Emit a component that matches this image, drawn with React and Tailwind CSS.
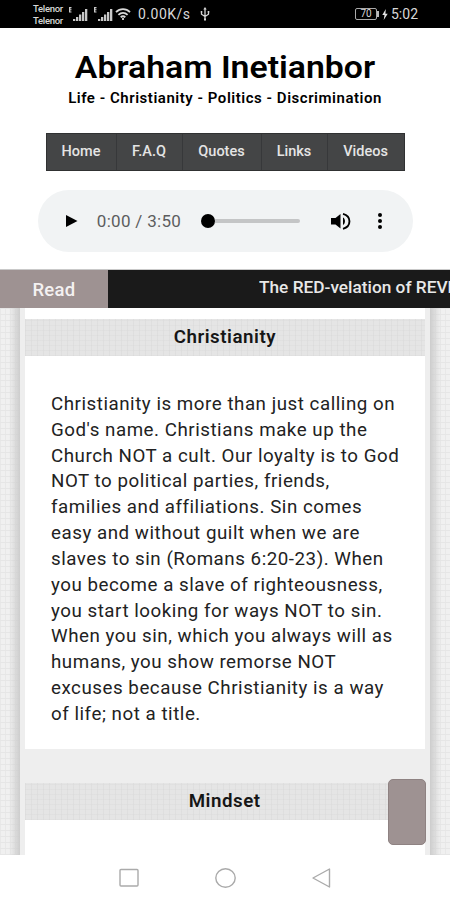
import React from 'react';

const menu = [
  { label: 'Home', width: 'w-[70px]' },
  { label: 'F.A.Q', width: 'w-[66px]' },
  { label: 'Quotes', width: 'w-[79px]' },
  { label: 'Links', width: 'w-[66px]' },
  { label: 'Videos', width: 'w-[76px]' },
];

const christianity = [
  'Christianity is more than just calling on',
  "God's name. Christians make up the",
  'Church NOT a cult. Our loyalty is to God',
  'NOT to political parties, friends,',
  'families and affiliations. Sin comes',
  'easy and without guilt when we are',
  'slaves to sin (Romans 6:20-23). When',
  'you become a slave of righteousness,',
  'you start looking for ways NOT to sin.',
  'When you sin, which you always will as',
  'humans, you show remorse NOT',
  'excuses because Christianity is a way',
  'of life; not a title.',
];

function Signal() {
  return (
    <svg width="19" height="16" viewBox="0 0 19 16" fill="#c8c8c8">
      <path d="M0 1h2.500v1.200H1.300v1h1.200v1H1.300v1.200h1.200v1.100H0z" />
      <path d="M4 13h2.300v2H4zM7 11h2.300v4H7zM10 8.500h2.300V15H10zM13 6h2.300v9H13zM16 3h2.300v12H16z" />
    </svg>
  );
}

function StatusBar() {
  return (
    <div className="flex h-7 items-center bg-black pl-[33px] pr-8 text-[#d8d8d8]">
      <div className="w-[31px] pt-[2px] text-[9.5px] font-medium leading-3 tracking-[-0.3px]">
        <p>Telenor</p>
        <p>Telenor</p>
      </div>
      <div className="ml-[5px] flex gap-[6px]">
        <Signal />
        <Signal />
      </div>
      <svg className="ml-[2px]" width="16" height="14" viewBox="0 0 16 14" fill="none" stroke="#d8d8d8" strokeWidth="1.800">
        <path d="M1 5.200c4-4 10-4 14 0M3.400 7.900c2.700-2.600 6.500-2.600 9.200 0M5.700 10.300c1.500-1.300 3.100-1.300 4.600 0" />
        <path d="M8 11v2" />
      </svg>
      <span className="ml-[7px] w-[54px] whitespace-nowrap text-[14px] leading-[30px] tracking-[0.5px]">0.00K/s</span>
      <svg className="ml-[8px]" width="10" height="14" viewBox="0 0 10 14" fill="none" stroke="#d8d8d8" strokeWidth="1.300">
        <path d="M5 2v10M1.500 5v2.200L5 9.500l3.500-2.300V4.500" />
        <path d="M5 0 3.300 2.500h3.400zM4 11.500h2v2H4zM.7 4h1.600v1.500H.7zM7.700 4h1.600v1.500H7.700z" fill="#d8d8d8" stroke="none" />
      </svg>
      <div className="ml-auto flex items-center">
        <span className="flex h-[12px] w-[22px] items-center justify-center rounded-[2px] border border-[#aaa] text-[10px] leading-none">70</span>
        <span className="h-[6px] w-[2px] bg-[#bbb]" />
        <svg className="ml-[3px]" width="6" height="11" viewBox="0 0 6 11" fill="#e5e5e5">
          <path d="M3.800 0 .3 6h2.200L1.700 11 5.700 4.700H3.400z" />
        </svg>
        <span className="ml-[3px] text-[14px] leading-[30px]">5:02</span>
      </div>
    </div>
  );
}

function Player() {
  return (
    <div className="mx-auto mt-[19px] flex h-[62px] w-[375px] items-center rounded-full bg-[#f1f3f4]">
      <svg className="ml-[28px]" width="12" height="14" viewBox="0 0 12 14">
        <path d="M0 1v12l11.500-6z" fill="#000" />
      </svg>
      <span className="ml-[19px] w-[85px] whitespace-nowrap text-[17px] leading-[63px] tracking-[0.3px] text-[#5c5d5e]">0:00 / 3:50</span>
      <div className="ml-[19px] flex w-[99px] items-center">
        <span className="size-[14px] shrink-0 rounded-full bg-black" />
        <span className="h-[4px] grow rounded-r-full bg-[#c4c5c6]" />
      </div>
      <svg className="ml-[31px]" width="20" height="18" viewBox="0 0 20 18">
        <path d="M0 6v6.500h4.500l5 4V2l-5 4z" fill="#000" />
        <path d="M12 5.500c2.600 1.200 2.600 6.200 0 7.500z" fill="#000" />
        <path d="M12 1.800c8.600 2.300 8.600 12.700 0 15" fill="none" stroke="#000" strokeWidth="1.900" />
      </svg>
      <svg className="ml-[26px]" width="6" height="18" viewBox="0 0 6 18">
        <circle cx="3" cy="3" r="2" />
        <circle cx="3" cy="9" r="2" />
        <circle cx="3" cy="15" r="2" />
      </svg>
    </div>
  );
}

function Header() {
  return (
    <header className="h-[242px] border-b border-[#c9c9c9] bg-white pt-[21px] text-center">
      <h1 className="scale-x-[1.09] whitespace-nowrap text-[31px] font-semibold leading-[38px] text-black">Abraham Inetianbor</h1>
      <h2 className="mt-[3px] scale-x-[1.07] whitespace-nowrap text-[14px] font-semibold leading-4 tracking-[0.5px] text-black">
        Life - Christianity - Politics - Discrimination
      </h2>
      <nav className="mx-auto mt-[27px] flex h-[38px] w-[359px] border border-[#303132] bg-[#444546]">
        {menu.map((item) => (
          <a key={item.label} className={`${item.width} shrink-0 border-r border-[#37383a] text-[14.5px] font-medium leading-[35px] text-[#e4e4e4] last:border-r-0`}>
            {item.label}
          </a>
        ))}
      </nav>
      <Player />
    </header>
  );
}

function SectionTitle({ children }) {
  return (
    <h3 className="h-[37px] bg-[#e5e5e5] bg-[repeating-linear-gradient(90deg,#d5d5d566_0_1px,transparent_1px_6px),repeating-linear-gradient(0deg,#d8d8d855_0_1px,transparent_1px_5px)] text-center text-[17.5px] font-semibold leading-[37px] text-[#161616]">
      <span className="inline-block scale-x-[1.07] tracking-[0.5px]">{children}</span>
    </h3>
  );
}

export default function App() {
  return (
    <div className="flex h-[900px] w-[450px] flex-col overflow-hidden bg-white font-['Roboto',sans-serif]">
      <StatusBar />
      <Header />
      <div className="flex h-[38px] overflow-hidden bg-[#1a1a1a]">
        <div className="w-[108px] shrink-0 bg-[#9e9292] text-center text-[18.5px] font-medium leading-[40px] tracking-[0.3px] text-[#f4f1f1]">Read</div>
        <p className="ml-[151px] shrink-0 origin-left scale-x-[1.046] whitespace-nowrap text-[16.5px] font-medium leading-[35px] text-[#e8e8e8]">The RED-velation of REVELATION</p>
      </div>

      <div className="relative flex h-[547px]">
        <div className="w-5 shrink-0 bg-[#f0f0f0] bg-[linear-gradient(90deg,transparent_45%,#cdcdcd_100%),repeating-linear-gradient(0deg,#e6e6e6_0_1px,transparent_1px_6px),repeating-linear-gradient(90deg,#e8e8e8_0_1px,transparent_1px_5px)]" />
        <main className="flex grow flex-col bg-[#eee] px-[5px]">
          <div className="h-[11px] bg-white" />
          <SectionTitle>Christianity</SectionTitle>
          <div className="h-[393px] bg-white pl-[25.5px] pt-[36px] text-[17.5px] leading-[25.83px] tracking-[0.5px] text-[#222]">
            {christianity.map((line) => (
              <p key={line} className="origin-left scale-x-[1.07] whitespace-nowrap">{line}</p>
            ))}
          </div>
          <div className="h-[34px]" />
          <SectionTitle>Mindset</SectionTitle>
          <div className="grow bg-white" />
        </main>
        <div className="w-[20px] shrink-0 bg-[#f0f0f0] bg-[linear-gradient(270deg,transparent_45%,#cdcdcd_100%),repeating-linear-gradient(0deg,#e6e6e6_0_1px,transparent_1px_6px),repeating-linear-gradient(90deg,#e8e8e8_0_1px,transparent_1px_5px)]" />
        <button className="absolute left-[388px] top-[471px] h-[66px] w-[38px] rounded-[5px] border border-[#8e8282] bg-[#9e9292]" aria-label="Back to top" />
      </div>

      <div className="flex h-[45px] items-center justify-center gap-[76px] bg-white">
        <svg width="20" height="20" viewBox="0 0 20 20" fill="none" stroke="#aaa" strokeWidth="1.400">
          <rect x="1" y="1.500" width="18" height="16.500" rx="1" />
        </svg>
        <svg width="21" height="20" viewBox="0 0 21 20" fill="none" stroke="#aaa" strokeWidth="1.400">
          <ellipse cx="10.500" cy="10" rx="9.700" ry="9.200" />
        </svg>
        <svg width="19" height="20" viewBox="0 0 19 20" fill="none" stroke="#aaa" strokeWidth="1.400" strokeLinejoin="round">
          <path d="M1 10 17.500 1v18z" />
        </svg>
      </div>
    </div>
  );
}
